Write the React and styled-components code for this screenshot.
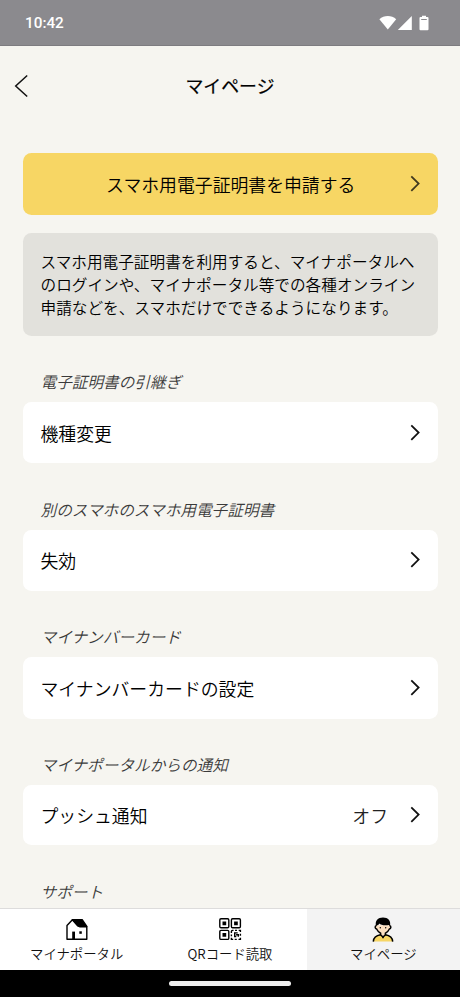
import styled, { createGlobalStyle } from 'styled-components'

const GlobalStyle = createGlobalStyle`
   * {
      box-sizing: border-box;
   }

   body {
      margin: 0;
      background: #f6f5f0;
      color: #000;
      font-family: 'Noto Sans CJK JP DemiLight', 'Noto Sans CJK JP', 'Noto Sans', sans-serif;
   }
`

const Screen = styled.div`
   width: 100%;
   height: 997px;
   display: flex;
   flex-direction: column;
   overflow: hidden;
   background: #f6f5f0;
`

const StatusBar = styled.div`
   height: 46px;
   flex-shrink: 0;
   display: flex;
   align-items: center;
   justify-content: space-between;
   padding: 0 30px 0 25px;
   background: #8b8a8e;
   border-bottom: 1px solid #7d7c80;
`

const Time = styled.span`
   font-family: Roboto, sans-serif;
   font-size: 15.3px;
   font-weight: 500;
   color: #fff;
`

const Header = styled.header`
   height: 80px;
   flex-shrink: 0;
   display: grid;
   grid-template-columns: 46px 1fr 46px;
   align-items: center;
`

const BackButton = styled.button`
   border: none;
   background: none;
   padding: 0 0 0 14px;
   display: flex;
   cursor: pointer;
`

const Title = styled.h1`
   margin: 0 0 2px;
   font-family: 'Noto Sans CJK JP', sans-serif;
   font-size: 17.9px;
   font-weight: 400;
   line-height: 26px;
   text-align: center;
   -webkit-text-stroke: 0.2px #000;
`

const Content = styled.main`
   flex: 1;
   min-height: 0;
   overflow: hidden;
   padding: 27px 22.5px 0;
`

const Card = styled.button`
   width: 100%;
   height: ${props => props.$height || '61.5px'};
   border: none;
   border-radius: 8.5px;
   background: #fff;
   color: #000;
   display: flex;
   align-items: center;
   padding: 0 16.5px 0 18px;
   font-family: inherit;
   font-size: 17.85px;
   line-height: 26px;
   font-weight: 300;
   text-align: left;
   cursor: pointer;
`

const ApplyCard = styled(Card)`
   background: #f7d664;
   text-align: center;
`

const CardText = styled.span`
   flex: 1;
`

const ApplyText = styled(CardText)`
   padding-left: 11px;
`

const CardValue = styled.span`
   margin-right: 22px;
   color: #222;
`

const Notice = styled.p`
   margin: 18.5px 0 0;
   height: 102.5px;
   padding: 16.5px 18px;
   border-radius: 8.5px;
   background: #e2e1dc;
   font-size: 15.65px;
   line-height: 23px;
   font-weight: 300;
   white-space: nowrap;
`

const Section = styled.section`
   padding-top: 34.4px;
`

const SectionLabel = styled.h2`
   margin: 0;
   height: 31.9px;
   padding-left: 18px;
   font-size: 15.65px;
   line-height: 23px;
   font-weight: 300;
   font-style: italic;
   color: #3a3a3a;
`

const TabBar = styled.nav`
   height: 62px;
   flex-shrink: 0;
   display: grid;
   grid-template-columns: repeat(3, 1fr);
   background: #fff;
   border-top: 1px solid #dddcdc;
`

const Tab = styled.a`
   display: flex;
   flex-direction: column;
   align-items: center;
   padding-top: 8px;
   background: ${props => props.$active ? '#f3f3f3' : '#fff'};
   color: #111;
   font-size: 13.35px;
   line-height: 20px;
   font-weight: 300;

   svg {
      margin-bottom: 1px;
   }
`

const GestureBar = styled.div`
   height: 27px;
   flex-shrink: 0;
   display: flex;
   align-items: center;
   justify-content: center;
   background: #000;
`

const GestureHandle = styled.div`
   width: 122px;
   height: 5px;
   border-radius: 3px;
   background: #eee;
`

const StatusIcons = () => (
   <svg width="51" height="18" viewBox="0 0 51 18" fill="#fff">
      <path d="M0.4 5.2C5 0.9 12.6 0.9 17.2 5.2L8.8 15.6Z" />
      <path d="M32.8 2v14H18.8Z" />
      <path d="M43 3.1V1.8h4v1.3h1.5q1 0 1 1v11.2q0 1-1 1h-7q-1 0-1-1V4.1q0-1 1-1Z" />
      <path d="M42.2 5.5h5.6" stroke="#8b8a8e" strokeWidth="1" />
   </svg>
)

const ChevronLeft = () => (
   <svg width="15" height="24" viewBox="0 0 15 24" fill="none" stroke="#111" strokeWidth="1.5">
      <path d="M13.2 1.5L1.7 12l11.5 10.5" />
   </svg>
)

const ChevronRight = ({ color = '#111' }) => (
   <svg width="11" height="18" viewBox="0 0 11 18" fill="none" stroke={color} strokeWidth="1.8">
      <path d="M1.3 1.4L8.6 8.6l-7.3 7.2" />
   </svg>
)

const HouseIcon = () => (
   <svg width="24" height="26" viewBox="0 0 24 26" fill="none" stroke="#000" strokeWidth="1.4" strokeLinejoin="round">
      <path d="M2 22.2V8.4L7.4 2.7l5.2 6.1 2 .9h7.2v12.5Z" />
      <path d="M7.4 2.7h9.8l4.6 6.7h-7.2Z" fill="#000" />
      <path d="M7.2 14.6h2.8v7.4H7.2Z" fill="#000" stroke="none" />
      <path d="M14.3 14.3h2.5v2.5h-2.5Z" fill="#000" stroke="none" />
   </svg>
)

const QrIcon = () => (
   <svg width="24" height="26" viewBox="0 0 24 26" fill="none" stroke="#000" strokeWidth="1.4">
      <rect x="1.8" y="1.8" width="9" height="9" rx="1.2" />
      <rect x="13.4" y="1.8" width="9" height="9" rx="1.2" />
      <rect x="1.8" y="13.4" width="9" height="9" rx="1.2" />
      <path d="M4.5 4.5h3.7v3.7H4.5ZM16.1 4.5h3.7v3.7h-3.7ZM4.5 16.1h3.7v3.7H4.5Z" fill="#000" stroke="none" />
      <path d="M13.4 16v-1.5q0-1.1 1.1-1.1h1M17 13.4h2M20.7 13.4h1.7v1.5M13.4 17.5v1.8M13.4 20.7v1.7h1.8M16.7 22.4h2.1M20.5 22.4h1.9v-1.7M22.4 16.8v2M19.7 15.9h-3v3.6h1.6M18.1 17.7h2.2v2" />
   </svg>
)

const PersonIcon = () => (
   <svg width="24" height="26" viewBox="0 0 24 26">
      <path d="M2.3 24.6c.2-4.7 2.8-6 6.3-6.8h6.8c3.5.8 6.1 2.1 6.3 6.8Z" fill="#f7d664" />
      <path d="M9.5 15h5v3.3L12 20.4l-2.5-2.1Z" fill="#fbe0c2" />
      <path d="M5.3 8.2C3.3 8.3 3.6 11.7 5.6 12 6.8 14.6 9.4 16.8 12 16.8s5.2-2.2 6.4-4.8c2-.3 2.3-3.7.3-3.8Z" fill="#fbe0c2" />
      <path d="M5.3 8.8C3.6 9 3.9 11.7 5.6 12c1 2 2.3 3.5 4 4.3v1.6L12 20l2.4-2.1v-1.6c1.7-.8 3-2.3 4-4.3 1.7-.3 2-3 .3-3.2" fill="none" stroke="#000" strokeWidth="1.5" />
      <path d="M5 9.3C3.7 3.5 7 .4 12 .4s8.3 3.1 7 8.9L17.8 8C13 8.6 9.5 7.8 8.3 6.4 7.8 7.9 6.2 8 5 9.3Z" />
      <path d="M9.6 17.8c-4.3.7-7 2.3-7.3 6.8M14.4 17.8c4.3.7 7 2.3 7.3 6.8M12 19.5v1.8" fill="none" stroke="#000" strokeWidth="1.5" />
      <circle cx="9.3" cy="10.7" r=".7" />
      <circle cx="14.7" cy="10.7" r=".7" />
   </svg>
)

const sections = [
   { label: '電子証明書の引継ぎ', item: '機種変更' },
   { label: '別のスマホのスマホ用電子証明書', item: '失効' },
   { label: 'マイナンバーカード', item: 'マイナンバーカードの設定' },
   { label: 'マイナポータルからの通知', item: 'プッシュ通知', value: 'オフ', height: '60px' },
   { label: 'サポート' },
]

const tabs = [
   { label: 'マイナポータル', Icon: HouseIcon },
   { label: 'QRコード読取', Icon: QrIcon },
   { label: 'マイページ', Icon: PersonIcon, active: true },
]

const App = () => {
   return (
      <>
         <GlobalStyle />
         <Screen>
            <StatusBar>
               <Time>10:42</Time>
               <StatusIcons />
            </StatusBar>
            <Header>
               <BackButton aria-label="戻る">
                  <ChevronLeft />
               </BackButton>
               <Title>マイページ</Title>
            </Header>
            <Content>
               <ApplyCard>
                  <ApplyText>スマホ用電子証明書を申請する</ApplyText>
                  <ChevronRight color="#40391f" />
               </ApplyCard>
               <Notice>
                  スマホ用電子証明書を利用すると、マイナポータルへ<br />
                  のログインや、マイナポータル等での各種オンライン<br />
                  申請などを、スマホだけでできるようになります。
               </Notice>
               {sections.map(({ label, item, value, height }) => (
                  <Section key={label}>
                     <SectionLabel>{label}</SectionLabel>
                     {item && (
                        <Card $height={height}>
                           <CardText>{item}</CardText>
                           {value && <CardValue>{value}</CardValue>}
                           <ChevronRight />
                        </Card>
                     )}
                  </Section>
               ))}
            </Content>
            <TabBar>
               {tabs.map(({ label, Icon, active }) => (
                  <Tab key={label} $active={active}>
                     <Icon />
                     {label}
                  </Tab>
               ))}
            </TabBar>
            <GestureBar>
               <GestureHandle />
            </GestureBar>
         </Screen>
      </>
   )
}

export default App
